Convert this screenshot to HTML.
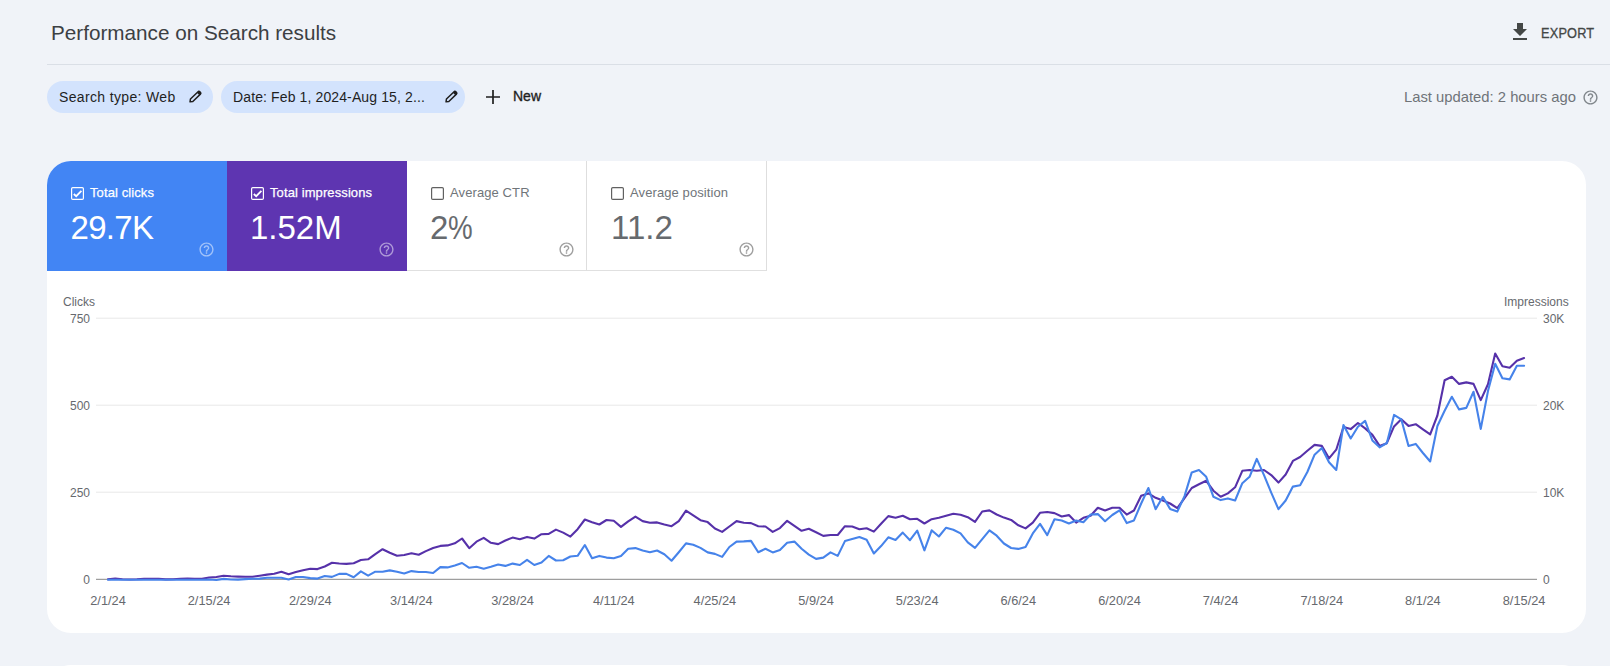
<!DOCTYPE html>
<html><head><meta charset="utf-8">
<style>
*{margin:0;padding:0;box-sizing:border-box}
html,body{width:1610px;height:666px;overflow:hidden;background:#f0f3f8;font-family:"Liberation Sans",sans-serif;position:relative}
.abs{position:absolute;white-space:nowrap}
.title{left:51px;top:21px;font-size:20.7px;color:#3c4043;line-height:24px}
.hline{left:47px;top:64px;width:1563px;height:1px;background:#dadfe6}
.export{left:1540.5px;top:24.5px;font-size:14.2px;color:#444746;line-height:16px;letter-spacing:0.2px;-webkit-text-stroke:0.3px #444746;transform:scaleX(0.9);transform-origin:0 0}
.chip{position:absolute;top:81px;height:32px;border-radius:16px;background:#d3e3fd;color:#1f1f1f}
.chip .t{position:absolute;top:8px;font-size:14px;line-height:16px;white-space:nowrap}
.chip svg{position:absolute;top:4px}
.new{left:513px;top:88px;font-size:14px;line-height:16px;color:#1f1f1f;-webkit-text-stroke:0.35px #1f1f1f}
.upd{left:1404px;top:89px;font-size:14.8px;line-height:16px;color:#6f7378}
.card{left:47px;top:161px;width:1539px;height:472px;background:#fff;border-radius:24px;overflow:hidden}
.tile{position:absolute;top:0;width:180px;height:110px}
.tile .lab{position:absolute;left:43px;top:24px;font-size:13px;line-height:16px;white-space:nowrap;letter-spacing:0.1px}
.w .lab{-webkit-text-stroke:0.25px #fff}
.g .lab{color:#70757a}
.g .val{color:#666a6e}
.tile .cb{position:absolute;left:24px;top:25.5px;width:13px;height:13px;line-height:0}
.tile .val{position:absolute;left:23px;top:48px;font-size:33px;line-height:38px;white-space:nowrap}
.tile .hp{position:absolute;left:150.7px;top:80px;line-height:0}
.xl{position:absolute;top:594px;width:80px;text-align:center;font-size:12.8px;line-height:14px;color:#66696e}
.yl{position:absolute;font-size:12px;line-height:16px;color:#66696e}
.yll{left:40px;width:50px;text-align:right}
.ylr{left:1543px;width:50px;text-align:left}
</style></head><body>
<div class="abs title">Performance on Search results</div>
<svg class="abs" style="left:1508px;top:20px" width="24" height="24" viewBox="0 0 24 24"><path fill="#444746" d="M19 9h-4V3H9v6H5l7 7 7-7zM5 18v2h14v-2H5z"/></svg>
<div class="abs export">EXPORT</div>
<div class="abs hline"></div>
<div class="chip" style="left:47px;width:166px"><div class="t" style="left:12px;letter-spacing:0.35px">Search type: Web</div><svg style="left:135.6px" width="24" height="24" viewBox="0 0 24 24"><g transform="translate(12 12) rotate(-44)"><path d="M-6.9 0 L-4.7 -1.7 L5.9 -1.7 Q7.1 -1.7 7.1 0 Q7.1 1.7 5.9 1.7 L-4.7 1.7 Z" fill="none" stroke="#1f1f1f" stroke-width="1.5" stroke-linejoin="round"/><rect x="4.4" y="-1.7" width="2.7" height="3.4" fill="#1f1f1f"/></g></svg></div>
<div class="chip" style="left:221px;width:244px"><div class="t" style="left:12px;letter-spacing:0.12px">Date: Feb 1, 2024-Aug 15, 2...</div><svg style="left:217.8px" width="24" height="24" viewBox="0 0 24 24"><g transform="translate(12 12) rotate(-44)"><path d="M-6.9 0 L-4.7 -1.7 L5.9 -1.7 Q7.1 -1.7 7.1 0 Q7.1 1.7 5.9 1.7 L-4.7 1.7 Z" fill="none" stroke="#1f1f1f" stroke-width="1.5" stroke-linejoin="round"/><rect x="4.4" y="-1.7" width="2.7" height="3.4" fill="#1f1f1f"/></g></svg></div>
<svg class="abs" style="left:484px;top:88px" width="18" height="18" viewBox="0 0 18 18"><path d="M9 2v14M2 9h14" stroke="#1f1f1f" stroke-width="1.7"/></svg>
<div class="abs new">New</div>
<div class="abs upd">Last updated: 2 hours ago</div>
<div class="abs" style="left:1581.5px;top:88.5px;line-height:0"><svg width="17" height="17" viewBox="0 0 24 24"><path fill="#80868b" d="M11 18h2v-2h-2v2zm1-16C6.48 2 2 6.48 2 12s4.48 10 10 10 10-4.48 10-10S17.52 2 12 2zm0 18c-4.41 0-8-3.59-8-8s3.59-8 8-8 8 3.59 8 8-3.59 8-8 8zm0-14c-2.21 0-4 1.79-4 4h2c0-1.1.9-2 2-2s2 .9 2 2c0 2-3 1.75-3 5h2c0-2.25 3-2.5 3-5 0-2.21-1.79-4-4-4z"/></svg></div>
<div class="abs card">
  <div class="tile w" style="left:0;background:#4285f4;color:#fff">
    <div class="cb"><svg width="13" height="13" viewBox="0 0 13 13"><rect x="0.6" y="0.6" width="11.8" height="11.8" rx="1.2" fill="none" stroke="#fff" stroke-width="1.2"/><path d="M2.8 7.0 L5.2 9.2 L10.4 3.9" fill="none" stroke="#fff" stroke-width="1.8"/></svg></div><div class="lab">Total clicks</div><div class="val" style="letter-spacing:-0.7px;left:23.5px">29.7K</div><div class="hp"><svg width="17" height="17" viewBox="0 0 24 24"><path fill="rgba(255,255,255,0.5)" d="M11 18h2v-2h-2v2zm1-16C6.48 2 2 6.48 2 12s4.48 10 10 10 10-4.48 10-10S17.52 2 12 2zm0 18c-4.41 0-8-3.59-8-8s3.59-8 8-8 8 3.59 8 8-3.59 8-8 8zm0-14c-2.21 0-4 1.79-4 4h2c0-1.1.9-2 2-2s2 .9 2 2c0 2-3 1.75-3 5h2c0-2.25 3-2.5 3-5 0-2.21-1.79-4-4-4z"/></svg></div>
  </div>
  <div class="tile w" style="left:180px;background:#5e35b1;color:#fff">
    <div class="cb"><svg width="13" height="13" viewBox="0 0 13 13"><rect x="0.6" y="0.6" width="11.8" height="11.8" rx="1.2" fill="none" stroke="#fff" stroke-width="1.2"/><path d="M2.8 7.0 L5.2 9.2 L10.4 3.9" fill="none" stroke="#fff" stroke-width="1.8"/></svg></div><div class="lab">Total impressions</div><div class="val">1.52M</div><div class="hp"><svg width="17" height="17" viewBox="0 0 24 24"><path fill="rgba(255,255,255,0.5)" d="M11 18h2v-2h-2v2zm1-16C6.48 2 2 6.48 2 12s4.48 10 10 10 10-4.48 10-10S17.52 2 12 2zm0 18c-4.41 0-8-3.59-8-8s3.59-8 8-8 8 3.59 8 8-3.59 8-8 8zm0-14c-2.21 0-4 1.79-4 4h2c0-1.1.9-2 2-2s2 .9 2 2c0 2-3 1.75-3 5h2c0-2.25 3-2.5 3-5 0-2.21-1.79-4-4-4z"/></svg></div>
  </div>
  <div class="tile g" style="left:360px;border-right:1px solid #dedede;border-bottom:1px solid #e0e0e0;color:#5f6368">
    <div class="cb"><svg width="13" height="13" viewBox="0 0 13 13"><rect x="0.6" y="0.6" width="11.8" height="11.8" rx="1.2" fill="none" stroke="#616161" stroke-width="1.2"/></svg></div><div class="lab">Average CTR</div><div class="val">2<span style="display:inline-block;transform:scaleX(0.84);transform-origin:0 0;margin-left:-0.5px">%</span></div><div class="hp"><svg width="17" height="17" viewBox="0 0 24 24"><path fill="#9e9e9e" d="M11 18h2v-2h-2v2zm1-16C6.48 2 2 6.48 2 12s4.48 10 10 10 10-4.48 10-10S17.52 2 12 2zm0 18c-4.41 0-8-3.59-8-8s3.59-8 8-8 8 3.59 8 8-3.59 8-8 8zm0-14c-2.21 0-4 1.79-4 4h2c0-1.1.9-2 2-2s2 .9 2 2c0 2-3 1.75-3 5h2c0-2.25 3-2.5 3-5 0-2.21-1.79-4-4-4z"/></svg></div>
  </div>
  <div class="tile g" style="left:540px;border-right:1px solid #dedede;border-bottom:1px solid #e0e0e0;color:#5f6368">
    <div class="cb"><svg width="13" height="13" viewBox="0 0 13 13"><rect x="0.6" y="0.6" width="11.8" height="11.8" rx="1.2" fill="none" stroke="#616161" stroke-width="1.2"/></svg></div><div class="lab">Average position</div><div class="val" style="left:24px">11.2</div><div class="hp"><svg width="17" height="17" viewBox="0 0 24 24"><path fill="#9e9e9e" d="M11 18h2v-2h-2v2zm1-16C6.48 2 2 6.48 2 12s4.48 10 10 10 10-4.48 10-10S17.52 2 12 2zm0 18c-4.41 0-8-3.59-8-8s3.59-8 8-8 8 3.59 8 8-3.59 8-8 8zm0-14c-2.21 0-4 1.79-4 4h2c0-1.1.9-2 2-2s2 .9 2 2c0 2-3 1.75-3 5h2c0-2.25 3-2.5 3-5 0-2.21-1.79-4-4-4z"/></svg></div>
  </div>
</div>
<div class="yl" style="left:63px;top:294px">Clicks</div>
<div class="yl" style="left:1504px;top:294px">Impressions</div>
<div class="yl yll" style="top:311.2px">750</div><div class="yl ylr" style="top:311.2px">30K</div><div class="yl yll" style="top:398.2px">500</div><div class="yl ylr" style="top:398.2px">20K</div><div class="yl yll" style="top:485.2px">250</div><div class="yl ylr" style="top:485.2px">10K</div><div class="yl yll" style="top:572.2px">0</div><div class="yl ylr" style="top:572.2px">0</div>
<svg class="abs" style="left:0;top:0" width="1610" height="666">
<line x1="96" y1="318.2" x2="1537" y2="318.2" stroke="#e8e8e8" stroke-width="1"/><line x1="96" y1="405.2" x2="1537" y2="405.2" stroke="#e8e8e8" stroke-width="1"/><line x1="96" y1="492.2" x2="1537" y2="492.2" stroke="#e8e8e8" stroke-width="1"/><line x1="96" y1="579.4" x2="1537" y2="579.4" stroke="#9e9e9e" stroke-width="1.2"/>
<path d="M108.00,579.30 L115.22,578.60 L122.45,579.20 L129.68,579.50 L136.90,579.30 L144.12,578.90 L151.35,578.70 L158.57,578.80 L165.80,579.40 L173.02,579.30 L180.25,578.80 L187.47,578.60 L194.70,578.80 L201.93,578.70 L209.15,577.50 L216.38,577.00 L223.60,575.70 L230.82,576.30 L238.05,576.60 L245.28,576.80 L252.50,576.70 L259.73,575.70 L266.95,574.60 L274.17,573.80 L281.40,571.80 L288.62,574.30 L295.85,572.00 L303.07,570.30 L310.30,568.70 L317.52,569.10 L324.75,566.50 L331.98,562.80 L339.20,563.50 L346.42,563.90 L353.65,563.20 L360.88,560.00 L368.10,559.30 L375.32,554.10 L382.55,549.20 L389.77,552.80 L397.00,555.80 L404.22,555.00 L411.45,553.20 L418.68,554.80 L425.90,551.10 L433.12,548.00 L440.35,545.90 L447.57,545.40 L454.80,543.30 L462.02,538.50 L469.25,548.20 L476.47,541.70 L483.70,537.80 L490.92,542.80 L498.15,544.10 L505.38,540.50 L512.60,537.60 L519.83,539.30 L527.05,536.90 L534.27,538.60 L541.50,534.20 L548.72,533.90 L555.95,529.60 L563.17,532.60 L570.40,536.60 L577.62,529.20 L584.85,519.50 L592.08,522.20 L599.30,524.50 L606.52,520.00 L613.75,520.80 L620.98,526.90 L628.20,521.40 L635.42,516.60 L642.65,521.10 L649.88,522.70 L657.10,522.40 L664.32,524.50 L671.55,526.20 L678.77,521.10 L686.00,510.70 L693.23,515.30 L700.45,520.20 L707.67,522.10 L714.90,528.50 L722.12,531.90 L729.35,526.50 L736.57,521.10 L743.80,522.70 L751.02,523.10 L758.25,526.20 L765.48,526.50 L772.70,531.90 L779.92,528.10 L787.15,520.80 L794.38,525.80 L801.60,530.80 L808.82,528.80 L816.05,532.20 L823.27,535.90 L830.50,535.00 L837.72,535.00 L844.95,526.20 L852.17,526.50 L859.40,529.20 L866.62,528.20 L873.85,531.60 L881.07,523.80 L888.30,516.10 L895.52,517.70 L902.75,515.80 L909.97,519.20 L917.20,518.80 L924.42,523.50 L931.65,519.20 L938.88,517.80 L946.10,515.80 L953.32,513.80 L960.55,514.70 L967.77,517.20 L975.00,521.90 L982.22,511.50 L989.45,510.40 L996.67,514.50 L1003.90,517.60 L1011.12,519.90 L1018.35,525.30 L1025.57,528.40 L1032.80,522.60 L1040.03,512.80 L1047.25,512.00 L1054.47,513.10 L1061.70,516.50 L1068.92,515.10 L1076.15,522.60 L1083.38,517.80 L1090.60,515.80 L1097.82,507.70 L1105.05,510.50 L1112.28,507.80 L1119.50,507.80 L1126.72,514.60 L1133.95,510.50 L1141.17,495.70 L1148.40,493.40 L1155.62,497.80 L1162.85,500.50 L1170.08,503.50 L1177.30,508.20 L1184.52,498.10 L1191.75,488.00 L1198.97,484.30 L1206.20,480.80 L1213.42,490.70 L1220.65,496.80 L1227.88,493.40 L1235.10,487.30 L1242.33,470.80 L1249.55,470.00 L1256.77,470.80 L1264.00,470.00 L1271.22,475.10 L1278.45,482.60 L1285.67,474.50 L1292.90,460.90 L1300.12,457.00 L1307.35,450.80 L1314.58,444.90 L1321.80,445.90 L1329.02,458.40 L1336.25,449.70 L1343.47,427.00 L1350.70,429.10 L1357.92,423.00 L1365.15,428.40 L1372.38,434.90 L1379.60,445.90 L1386.83,443.20 L1394.05,426.40 L1401.27,419.30 L1408.50,425.90 L1415.72,424.20 L1422.95,429.30 L1430.17,434.40 L1437.40,415.50 L1444.62,380.30 L1451.85,376.80 L1459.08,383.90 L1466.30,382.40 L1473.52,383.90 L1480.75,400.10 L1487.97,384.30 L1495.20,353.50 L1502.42,366.30 L1509.65,367.80 L1516.88,360.70 L1524.10,358.00" fill="none" stroke="#5631a9" stroke-width="2.1" stroke-linejoin="round" stroke-linecap="round"/>
<path d="M108.00,579.80 L115.22,579.80 L122.45,579.80 L129.68,579.80 L136.90,579.80 L144.12,579.80 L151.35,579.80 L158.57,579.80 L165.80,579.80 L173.02,579.80 L180.25,579.80 L187.47,579.80 L194.70,579.80 L201.93,579.80 L209.15,579.50 L216.38,580.00 L223.60,578.90 L230.82,579.50 L238.05,579.60 L245.28,579.10 L252.50,578.80 L259.73,578.60 L266.95,577.70 L274.17,577.70 L281.40,577.70 L288.62,579.50 L295.85,577.00 L303.07,577.00 L310.30,578.10 L317.52,578.60 L324.75,576.00 L331.98,576.90 L339.20,573.90 L346.42,573.90 L353.65,577.30 L360.88,571.40 L368.10,575.60 L375.32,571.70 L382.55,571.70 L389.77,570.40 L397.00,571.70 L404.22,573.40 L411.45,571.10 L418.68,572.00 L425.90,572.00 L433.12,573.00 L440.35,567.10 L447.57,567.40 L454.80,565.40 L462.02,563.00 L469.25,567.80 L476.47,566.80 L483.70,568.70 L490.92,566.80 L498.15,564.50 L505.38,565.90 L512.60,563.60 L519.83,565.00 L527.05,559.90 L534.27,565.00 L541.50,562.60 L548.72,555.90 L555.95,560.50 L563.17,560.30 L570.40,556.50 L577.62,555.80 L584.85,545.00 L592.08,558.20 L599.30,555.90 L606.52,557.60 L613.75,558.20 L620.98,555.90 L628.20,548.80 L635.42,548.10 L642.65,550.50 L649.88,552.20 L657.10,550.50 L664.32,554.20 L671.55,560.70 L678.77,552.20 L686.00,543.40 L693.23,544.70 L700.45,547.90 L707.67,552.40 L714.90,553.90 L722.12,556.90 L729.35,547.00 L736.57,541.60 L743.80,541.40 L751.02,540.90 L758.25,552.20 L765.48,548.80 L772.70,552.40 L779.92,549.90 L787.15,542.70 L794.38,541.60 L801.60,548.80 L808.82,554.60 L816.05,558.90 L823.27,557.60 L830.50,552.40 L837.72,555.90 L844.95,541.10 L852.17,539.10 L859.40,537.00 L866.62,539.70 L873.85,553.50 L881.07,546.10 L888.30,537.30 L895.52,540.00 L902.75,532.60 L909.97,540.20 L917.20,530.70 L924.42,550.30 L931.65,530.30 L938.88,536.50 L946.10,527.70 L953.32,529.70 L960.55,533.40 L967.77,542.40 L975.00,547.80 L982.22,539.10 L989.45,530.30 L996.67,535.70 L1003.90,543.50 L1011.12,548.00 L1018.35,548.90 L1025.57,546.90 L1032.80,533.40 L1040.03,523.90 L1047.25,535.10 L1054.47,519.20 L1061.70,520.50 L1068.92,523.50 L1076.15,520.50 L1083.38,522.30 L1090.60,514.50 L1097.82,514.10 L1105.05,521.20 L1112.28,515.00 L1119.50,510.30 L1126.72,523.10 L1133.95,520.40 L1141.17,503.50 L1148.40,488.00 L1155.62,509.20 L1162.85,496.80 L1170.08,508.90 L1177.30,511.60 L1184.52,496.10 L1191.75,472.40 L1198.97,470.00 L1206.20,476.80 L1213.42,496.80 L1220.65,500.10 L1227.88,498.40 L1235.10,500.50 L1242.33,483.20 L1249.55,476.80 L1256.77,458.90 L1264.00,475.10 L1271.22,492.70 L1278.45,509.20 L1285.67,500.50 L1292.90,486.60 L1300.12,485.20 L1307.35,472.00 L1314.58,454.70 L1321.80,448.00 L1329.02,462.20 L1336.25,470.00 L1343.47,425.00 L1350.70,438.50 L1357.92,426.80 L1365.15,420.90 L1372.38,440.50 L1379.60,447.30 L1386.83,443.00 L1394.05,414.90 L1401.27,419.30 L1408.50,445.90 L1415.72,443.90 L1422.95,453.00 L1430.17,461.50 L1437.40,426.00 L1444.62,410.70 L1451.85,396.80 L1459.08,409.40 L1466.30,407.90 L1473.52,391.80 L1480.75,428.90 L1487.97,391.10 L1495.20,363.70 L1502.42,378.30 L1509.65,379.40 L1516.88,365.80 L1524.10,365.80" fill="none" stroke="#4683ea" stroke-width="2.1" stroke-linejoin="round" stroke-linecap="round"/>
</svg>
<div class="xl" style="left:68.0px">2/1/24</div><div class="xl" style="left:169.1px">2/15/24</div><div class="xl" style="left:270.3px">2/29/24</div><div class="xl" style="left:371.4px">3/14/24</div><div class="xl" style="left:472.6px">3/28/24</div><div class="xl" style="left:573.8px">4/11/24</div><div class="xl" style="left:674.9px">4/25/24</div><div class="xl" style="left:776.0px">5/9/24</div><div class="xl" style="left:877.2px">5/23/24</div><div class="xl" style="left:978.3px">6/6/24</div><div class="xl" style="left:1079.5px">6/20/24</div><div class="xl" style="left:1180.6px">7/4/24</div><div class="xl" style="left:1281.8px">7/18/24</div><div class="xl" style="left:1382.9px">8/1/24</div><div class="xl" style="left:1484.1px">8/15/24</div>
<div class="abs" style="left:47px;top:665px;width:1539px;height:60px;background:#fff;border-radius:24px"></div>
</body></html>
